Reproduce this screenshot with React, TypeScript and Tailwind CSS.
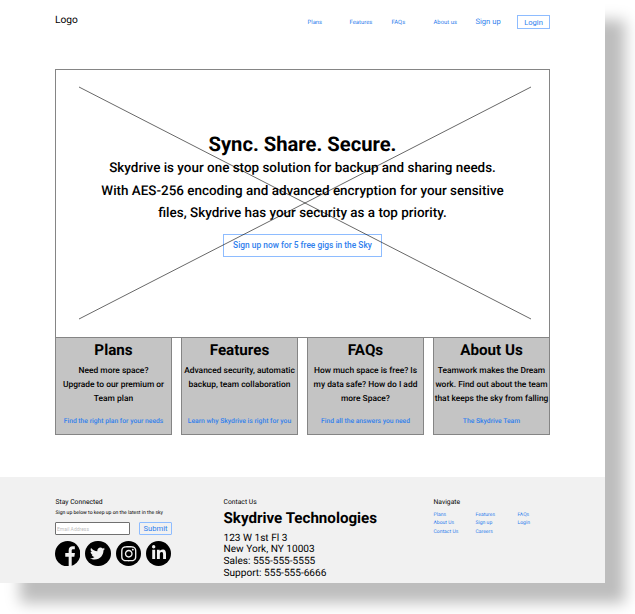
import React from "react";
import { FaTwitter, FaInstagram, FaLinkedinIn } from "react-icons/fa";

const navLinks = ["Plans", "Features", "FAQs", "About us"];

const cards = [
  { title: "Plans", lines: ["Need more space?", "Upgrade to our premium or", "Team plan"], link: "Find the right plan for your needs" },
  { title: "Features", lines: ["Advanced security, automatic", "backup, team collaboration", ""], link: "Learn why Skydrive is right for you" },
  { title: "FAQs", lines: ["How much space is free? Is", "my data safe? How do I add", "more Space?"], link: "Find all the answers you need" },
  { title: "About Us", lines: ["Teamwork makes the Dream", "work. Find out about the team", "that keeps the sky from falling"], link: "The Skydrive Team" },
];

const footerLinks = [
  ["Plans", "About Us", "Contact Us"],
  ["Features", "Sign up", "Careers"],
  ["FAQs", "Login"],
];

function Header() {
  return (
    <header className="flex h-[69px] items-start pr-[55px] pl-[55px]">
      <div className="mt-[13px] w-[252.500px] text-[10.2px] leading-[15px]">Logo</div>
      <nav className="mt-[18px] flex text-[5.9px] leading-[10px] text-[#2f80ed]">
        {navLinks.map((label) => (
          <a key={label} className="w-[42px]">{label}</a>
        ))}
      </nav>
      <a className="mt-[16px] w-[41.500px] text-[7.6px] leading-[11px] text-[#2f80ed]">Sign up</a>
      <button className="mt-[15px] flex h-[14px] w-[33px] items-center justify-center border border-[#8ebcff] pt-px text-[7.6px] leading-none text-[#2f80ed]">
        Login
      </button>
    </header>
  );
}

function Hero() {
  return (
    <section className="relative mx-[55px] flex h-[269px] flex-col items-center border border-[#858585] pt-[62px] font-medium whitespace-nowrap">
      <h1 className="text-[20.2px] leading-[25px] font-bold">Sync. Share. Secure.</h1>
      <p className="mt-px text-center text-[13.45px] leading-[22.7px]">
        Skydrive is your one stop solution for backup and sharing needs.
        <br />
        With AES-256 encoding and advanced encryption for your sensitive
        <br />
        files, Skydrive has your security as a top priority.
      </p>
      <button className="mt-[8px] flex h-[23px] w-[159px] items-center justify-center border border-[#8ebcff] text-[8.4px] font-medium text-[#2f80ed]">
        Sign up now for 5 free gigs in the Sky
      </button>
      <svg className="absolute -top-px -left-px" width="495" height="269" viewBox="0 0 495 269" stroke="#000" strokeWidth="0.6">
        <path d="M24 18L476 250M476 18L24 250" />
      </svg>
    </section>
  );
}

function Cards() {
  return (
    <section className="mx-[55px] -mt-px grid grid-cols-4 gap-[9px]">
      {cards.map((card) => (
        <article key={card.title} className="flex h-[98px] flex-col items-center border border-[#858585] border-t-[#606060] bg-[#c4c4c4] font-medium whitespace-nowrap">
          <h2 className="mt-[2px] text-[15.2px] leading-[20px] font-bold">{card.title}</h2>
          <div className="mt-[4px] h-[42px] text-center text-[8.42px] leading-[14px]">
            {card.lines.map((line, i) => (
              <div key={i} className="-mx-2">{line}</div>
            ))}
          </div>
          <a className="mt-[10px] text-[6.75px] leading-[10px] text-[#2f80ed]">{card.link}</a>
        </article>
      ))}
    </section>
  );
}

function Social() {
  const disc = "flex size-[25.4px] items-center justify-center rounded-full bg-black text-[#f1f1f1]";
  return (
    <div className="mt-[6px] -ml-[0.500px] flex gap-[4.9px]">
      <svg width="25.4" height="25.4" viewBox="0 0 26 26">
        <circle cx="13" cy="13" r="13" />
        <path fill="#f1f1f1" d="M14 26V16H10.500v-3.700H14V9.500C14 6.500 15.800 5.300 18 5.300h2.300v3.200h-1.700c-1.200 0-1.500.600-1.500 1.500v2.300h3.300l-.600 3.700h-2.700v10z" />
      </svg>
      <div className={disc}><FaTwitter size={15} /></div>
      <div className={disc}><FaInstagram size={17.5} /></div>
      <div className={disc}><FaLinkedinIn size={16} className="-mt-px" /></div>
    </div>
  );
}

function Footer() {
  return (
    <footer className="flex h-[106px] bg-[#f1f1f1] pl-[55.500px] whitespace-nowrap">
      <div className="w-[168px] pt-[20px]">
        <h3 className="text-[6.75px] leading-[10px]">Stay Connected</h3>
        <p className="mt-[2px] text-[5.05px] leading-[9px]">Sign up below to keep up on the latest in the sky</p>
        <div className="mt-[4px] -ml-[0.500px] flex gap-[9px]">
          <input className="h-[13px] w-[75px] rounded-[1px] border border-[#707070] bg-white px-px text-[5px] placeholder:text-[#bdbdbd]" placeholder="Email Address" />
          <button className="flex h-[13px] w-[33px] items-center justify-center rounded-[1px] border border-[#8ebcff] text-[7.6px] leading-none text-[#2f80ed]">Submit</button>
        </div>
        <Social />
      </div>
      <div className="w-[210px] pt-[20px]">
        <h3 className="text-[6.75px] leading-[10px]">Contact Us</h3>
        <p className="mt-px text-[15.15px] leading-[20px] font-bold">Skydrive Technologies</p>
        <address className="mt-[4.500px] text-[10.1px] leading-[11.8px] not-italic">
          123 W 1st Fl 3<br />
          New York, NY 10003<br />
          Sales: 555-555-5555<br />
          Support: 555-555-6666
        </address>
      </div>
      <div className="pt-[20px]">
        <h3 className="text-[6.75px] leading-[10px]">Navigate</h3>
        <div className="mt-[4px] flex text-[5.05px] leading-[8.4px] text-[#2f80ed]">
          {footerLinks.map((column) => (
            <ul key={column[0]} className="w-[42px]">
              {column.map((label) => (
                <li key={label}>{label}</li>
              ))}
            </ul>
          ))}
        </div>
      </div>
    </footer>
  );
}

export default function App() {
  return (
    <div className="h-[614px] w-[635px] overflow-hidden bg-white font-['Roboto',sans-serif] text-black [text-rendering:geometricPrecision]">
      <main className="flex h-[583px] w-[605px] flex-col bg-white shadow-[20px_20px_14px_#bdbdbd]">
        <Header />
        <Hero />
        <Cards />
        <div className="flex-1" />
        <Footer />
      </main>
    </div>
  );
}
